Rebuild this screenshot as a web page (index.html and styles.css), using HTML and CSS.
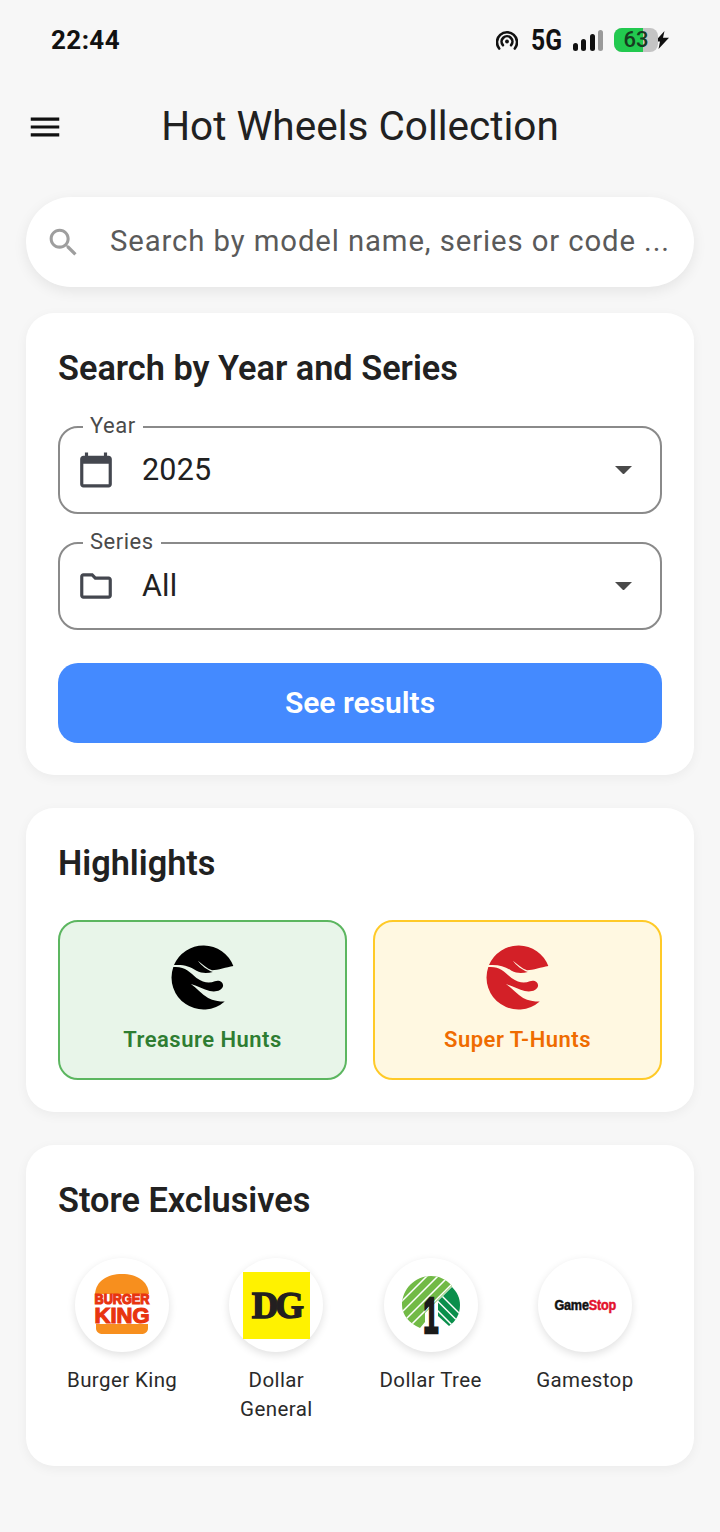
FILE: index.html
```html
<!DOCTYPE html>
<html lang="en">
<head>
  <meta charset="UTF-8">
  <title>Hot Wheels Collection</title>
  <link rel="stylesheet" href="styles.css">
</head>
<body>
  <!-- status bar -->
  <div class="status-bar">
    <span class="time">22:44</span>
    <div class="status-icons">
      <svg class="hotspot" viewBox="0 0 22 20" width="22" height="20">
        <path d="M3.2 18.500a10 10 0 1 1 15.600 0" fill="none" stroke="#111" stroke-width="2.600" stroke-linecap="round"/>
        <path d="M6.900 15.200a5.400 5.400 0 1 1 8.200 0" fill="none" stroke="#111" stroke-width="2.600" stroke-linecap="round"/>
        <circle cx="11" cy="11.500" r="1.900" fill="#111"/>
      </svg>
      <span class="net">5G</span>
      <div class="signal">
        <i class="bar-1"></i><i class="bar-2"></i><i class="bar-3"></i><i class="bar-4"></i>
      </div>
      <div class="battery"><div class="battery-fill"></div><span>63</span></div>
      <svg class="bolt" viewBox="0 0 14 18" width="14" height="18"><path d="M9.500 0 0 10.500h5L3.500 18 14 6.800H8z" fill="#111"/></svg>
    </div>
  </div>

  <header class="app-bar">
    <svg class="menu-icon" viewBox="0 0 24 24" width="38" height="38"><path d="M3 18h18v-2H3v2zm0-5h18v-2H3v2zm0-7v2h18V6H3z"/></svg>
    <h1>Hot Wheels Collection</h1>
  </header>

  <main class="content">
    <div class="search">
      <svg viewBox="0 0 24 24" width="37" height="37"><path d="M15.5 14h-.79l-.28-.27C15.41 12.59 16 11.11 16 9.5 16 5.91 13.09 3 9.5 3S3 5.91 3 9.5 5.91 16 9.5 16c1.61 0 3.09-.59 4.23-1.57l.27.28v.79l5 4.99L20.49 19l-4.99-5zm-6 0C7.01 14 5 11.99 5 9.5S7.01 5 9.5 5 14 7.01 14 9.5 11.99 14 9.5 14z"/></svg>
      <span>Search by model name, series or code ...</span>
    </div>

    <section class="card card-filter">
      <h2>Search by Year and Series</h2>
      <div class="field">
        <label>Year</label>
        <svg class="field-icon" viewBox="0 0 24 24" width="38" height="38"><path d="M20 3h-1V1h-2v2H7V1H5v2H4c-1.1 0-2 .9-2 2v16c0 1.1.9 2 2 2h16c1.1 0 2-.9 2-2V5c0-1.1-.9-2-2-2zm0 18H4V8h16v13z"/></svg>
        <span class="field-value">2025</span>
        <svg class="arrow" viewBox="7 10 10 5" width="17" height="8.5"><path d="M7 10l5 5 5-5z"/></svg>
      </div>
      <div class="field">
        <label>Series</label>
        <svg class="field-icon" viewBox="0 0 24 24" width="38" height="38"><path d="M9.17 6l2 2H20v10H4V6h5.17M10 4H4c-1.1 0-1.99.9-1.99 2L2 18c0 1.1.9 2 2 2h16c1.1 0 2-.9 2-2V8c0-1.1-.9-2-2-2h-8l-2-2z"/></svg>
        <span class="field-value">All</span>
        <svg class="arrow" viewBox="7 10 10 5" width="17" height="8.5"><path d="M7 10l5 5 5-5z"/></svg>
      </div>
      <button class="results-btn">See results</button>
    </section>

    <section class="card card-highlights">
      <h2>Highlights</h2>
      <div class="tiles">
        <div class="tile tile-green">
          <svg class="flame" viewBox="120 40 196 204" width="65" height="68">
            <path d="M132 103A96.500 96.500 0 0 1 311 106C290 110 265 118 247 119 232 114 218 100 204 90 214 104 232 118 249 124 232 128 215 128 200 120 180 106 160 101 132 103Z"/>
            <path d="M130 109C165 106 180 125 200 142 222 158 240 158 255 152 268 147 281 154 280 166 277 180 258 185 240 181 222 176 200 165 183 160 200 172 215 190 235 202 250 210 268 213 285 213A96.500 96.500 0 0 1 130 109Z"/>
          </svg>
          <span>Treasure Hunts</span>
        </div>
        <div class="tile tile-yellow">
          <svg class="flame" viewBox="120 40 196 204" width="65" height="68">
            <path d="M132 103A96.500 96.500 0 0 1 311 106C290 110 265 118 247 119 232 114 218 100 204 90 214 104 232 118 249 124 232 128 215 128 200 120 180 106 160 101 132 103Z"/>
            <path d="M130 109C165 106 180 125 200 142 222 158 240 158 255 152 268 147 281 154 280 166 277 180 258 185 240 181 222 176 200 165 183 160 200 172 215 190 235 202 250 210 268 213 285 213A96.500 96.500 0 0 1 130 109Z"/>
          </svg>
          <span>Super T-Hunts</span>
        </div>
      </div>
    </section>

    <section class="card card-stores">
      <h2>Store Exclusives</h2>
      <div class="stores">
        <div class="store">
          <div class="store-logo">
            <svg viewBox="0 0 58 62" width="58" height="62">
              <path d="M2 20C3 7 14 0 29 0S55 7 56 20z" fill="#f78f1e"/>
              <path d="M3 50h52v4c0 4-3 6-7 6H10c-4 0-7-2-7-6z" fill="#f78f1e"/>
              <text class="bk-text" x="29" y="30" font-size="14" textLength="55" lengthAdjust="spacingAndGlyphs">BURGER</text>
              <text class="bk-text" x="29" y="49" font-size="22" textLength="55" lengthAdjust="spacingAndGlyphs">KING</text>
            </svg>
          </div>
          <span class="store-name">Burger King</span>
        </div>
        <div class="store">
          <div class="store-logo">
            <div class="dg-logo">DG</div>
          </div>
          <span class="store-name">Dollar General</span>
        </div>
        <div class="store">
          <div class="store-logo">
            <svg viewBox="0 -6 60 72" width="60" height="72">
              <defs>
                <clipPath id="tree-left"><path d="M1 30C1 14 14 1 30 1 38 1 45 4 51 11L33 29 24 38V47L19 53C8 48 1 40 1 30Z"/></clipPath>
                <clipPath id="tree-right"><path d="M51 12C56 17 59 23 59 30 59 39 55 46 48 51L37 41V26Z"/></clipPath>
              </defs>
              <g clip-path="url(#tree-left)">
                <rect width="60" height="60" fill="#72ba46"/>
                <path d="M-5 21 21-5M-5 32 32-5M-5 43 43-5M-5 54 54-5M-5 65 65-5" stroke="#fff" stroke-width="1.500"/>
              </g>
              <g clip-path="url(#tree-right)">
                <rect width="60" height="60" fill="#0a8f4b"/>
                <path d="M30 10 70 50M30 19.500 70 59.500M30 29 70 69M30 38.500 70 78.500" stroke="#fff" stroke-width="1.500"/>
              </g>
              <text class="tree-one" transform="translate(30 58) scale(0.55 1)">1</text>
            </svg>
          </div>
          <span class="store-name">Dollar Tree</span>
        </div>
        <div class="store">
          <div class="store-logo">
            <span class="gs-logo">Game<b>Stop</b></span>
          </div>
          <span class="store-name">Gamestop</span>
        </div>
      </div>
    </section>
  </main>
</body>
</html>
```

FILE: styles.css
```css
body {
  margin: 0;
  width: 720px;
  height: 1532px;
  overflow: hidden;
  background: #f7f7f7;
  font-family: Roboto, "Noto Sans", sans-serif;
  color: #212121;
}

/* status bar */
.status-bar {
  display: flex;
  justify-content: space-between;
  align-items: center;
  height: 30px;
  padding: 25px 51px 0;
}

.time {
  font-size: 26px;
  font-weight: 700;
  color: #111;
  letter-spacing: 0.4px;
}

.status-icons {
  display: flex;
  align-items: center;
}

.hotspot {
  margin-right: 13px;
}

.net {
  font-size: 29px;
  font-weight: 700;
  line-height: 30px;
  color: #111;
  transform: scaleX(0.85);
  transform-origin: left;
  width: 31px;
  margin-right: 11px;
}

.signal {
  display: flex;
  align-items: flex-end;
  gap: 3.5px;
  height: 21px;
  margin-right: 11px;
}

.signal i {
  display: block;
  width: 5px;
  border-radius: 3px;
  background: #111;
}

.bar-1 { height: 8px; }
.bar-2 { height: 12px; }
.bar-3 { height: 17px; }
.signal .bar-4 { height: 21px; background: #9a9a9a; }

.battery {
  position: relative;
  width: 44px;
  height: 24px;
  border-radius: 8px;
  background: #c4c4c4;
  text-align: center;
  font-size: 22px;
  line-height: 24px;
  font-weight: 500;
  color: #173a20;
}

.battery-fill {
  position: absolute;
  left: 0;
  top: 0;
  bottom: 0;
  width: 29px;
  border-radius: 8px 0 0 8px;
  background: #22c94f;
}

.battery span {
  position: relative;
}

.bolt {
  margin-left: -3px;
}

/* app bar */
.app-bar {
  display: flex;
  align-items: center;
  height: 60px;
  margin-top: 42px;
  padding-left: 26px;
  position: relative;
}

.menu-icon {
  fill: #111;
}

.app-bar h1 {
  position: absolute;
  left: 0;
  right: 0;
  margin: 0;
  padding-bottom: 2px;
  text-align: center;
  font-size: 40.5px;
  font-weight: 400;
  color: #212121;
}

/* content */
.content {
  padding: 0 26px;
  margin-top: 40px;
}

.search {
  display: flex;
  align-items: center;
  gap: 28px;
  height: 90px;
  padding-left: 19px;
  border-radius: 45px;
  background: #fff;
  box-shadow: 0 4px 14px rgba(0, 0, 0, 0.08);
  font-size: 29.3px;
  letter-spacing: 0.9px;
  color: #5a5a5a;
  white-space: nowrap;
}

.search span {
  padding-bottom: 2px;
}

.search svg {
  fill: #9e9e9e;
  flex: none;
}

.card {
  background: #fff;
  border-radius: 28px;
  padding: 32px;
  margin-top: 33px;
  box-shadow: 0 3px 12px rgba(0, 0, 0, 0.05);
}

.card h2 {
  margin: 0;
  font-size: 34.3px;
  line-height: 46px;
  font-weight: 600;
  color: #212121;
}

.card-filter {
  margin-top: 26px;
}

.field {
  position: relative;
  display: flex;
  align-items: center;
  height: 88px;
  margin-top: 28px;
  padding: 0 28px 0 17px;
  border: 2px solid #8a8a8a;
  border-radius: 20px;
  box-sizing: border-box;
}

.card h2 + .field {
  margin-top: 35px;
}

.field label {
  position: absolute;
  left: 23px;
  top: -16px;
  padding: 0 7px;
  background: #fff;
  font-size: 22px;
  line-height: 28px;
  letter-spacing: 0.5px;
  color: #4a4a4a;
}

.field-icon {
  fill: #44474f;
  flex: none;
}

.field-value {
  flex: 1;
  margin-left: 27px;
  padding-bottom: 2px;
  font-size: 30.5px;
  letter-spacing: 0.2px;
  color: #212121;
}

.arrow {
  fill: #4a4a4a;
}

.results-btn {
  display: block;
  width: 100%;
  height: 80px;
  margin-top: 33px;
  padding: 0 0 2px;
  border: 0;
  border-radius: 20px;
  background: #448aff;
  color: #fff;
  font-family: inherit;
  font-size: 30px;
  font-weight: 600;
}

.card-highlights h2 + .tiles {
  margin-top: 34px;
}

.tiles {
  display: grid;
  grid-template-columns: 1fr 1fr;
  gap: 26px;
}

.tile {
  display: flex;
  flex-direction: column;
  align-items: center;
  height: 160px;
  box-sizing: border-box;
  padding-top: 22px;
  border-radius: 20px;
  border: 2px solid;
  font-size: 22px;
  font-weight: 600;
  letter-spacing: 0.5px;
}

.tile span {
  margin-top: 15px;
}

.tile-green {
  background: #e8f5e9;
  border-color: #5cb660;
  color: #2e7d32;
}

.tile-yellow {
  background: #fff8e1;
  border-color: #ffca28;
  color: #ef6c00;
}

.tile-yellow .flame {
  fill: #d32027;
}

/* store list */
.card-stores {
  padding-bottom: 42px;
}

.stores {
  display: grid;
  grid-template-columns: repeat(4, 1fr);
  margin: 35px 0 0 -13px;
}

.store {
  display: flex;
  flex-direction: column;
  align-items: center;
  text-align: center;
}

.store-logo {
  display: flex;
  align-items: center;
  justify-content: center;
  width: 94px;
  height: 94px;
  border-radius: 50%;
  background: #fff;
  box-shadow: 0 3px 8px rgba(0, 0, 0, 0.12);
}

.store-name {
  margin-top: 14px;
  padding: 0 20px;
  font-size: 20.5px;
  line-height: 29px;
  letter-spacing: 0.4px;
  color: #2a2a2a;
}

.bk-text {
  font-family: "Liberation Sans", sans-serif;
  font-weight: 700;
  text-anchor: middle;
  fill: #e8340f;
  stroke: #e8340f;
  stroke-width: 1.2px;
}

.dg-logo {
  display: flex;
  align-items: center;
  justify-content: center;
  width: 67px;
  height: 67px;
  background: #fff200;
  font-family: "Liberation Serif", serif;
  font-weight: 700;
  font-size: 37px;
  letter-spacing: -3px;
  color: #231f20;
  -webkit-text-stroke: 1.4px #231f20;
}

.tree-one {
  font-family: "Liberation Sans", sans-serif;
  font-weight: 700;
  font-size: 50px;
  text-anchor: middle;
  fill: #1a1a1a;
  stroke: #1a1a1a;
  stroke-width: 2.5px;
}

.gs-logo {
  display: inline-block;
  font-family: "Liberation Sans", sans-serif;
  font-weight: 700;
  font-size: 14px;
  letter-spacing: -0.2px;
  color: #111;
  -webkit-text-stroke: 0.5px currentColor;
  transform: scaleX(0.9);
}

.gs-logo b {
  color: #e3122d;
}
```
